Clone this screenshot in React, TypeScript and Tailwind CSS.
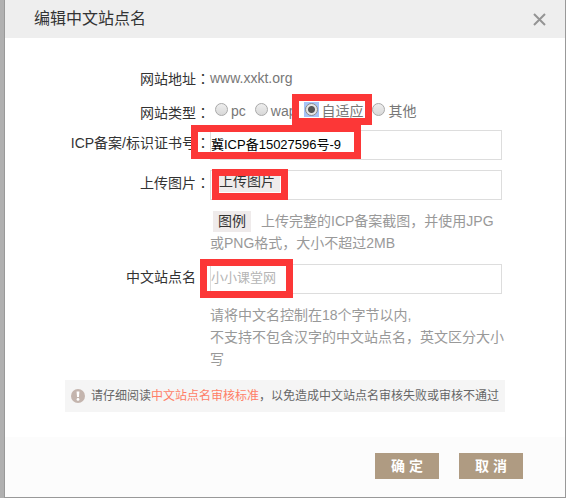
import React from "react";
import { clsx } from "clsx";

// Edit dialog for a site's Chinese name
// Layout: header bar, label/field rows, notice strip, footer buttons
// The red frames mark the fields that a tutorial reader has to fill in

const siteTypes = [
  { id: "pc", label: "pc" },
  { id: "wap", label: "wap" },
  { id: "responsive", label: "自适应", marked: true },
  { id: "other", label: "其他" },
];

// Full-width punctuation
const COLON = "\uff1a";
const COMMA = "\uff0c";

function Mark({ className }: { className: string }) {
  return (
    <span
      aria-hidden="true"
      className={clsx("pointer-events-none absolute z-10 border-[7px] border-[#fc3737]", className)}
    />
  );
}

// The TC face centres the colon in its cell
function Colon() {
  return <span className="font-['Noto_Sans_CJK_TC',sans-serif]">{COLON}</span>;
}

function Row({
  label,
  htmlFor,
  className,
  children,
}: {
  label: string;
  htmlFor?: string;
  className?: string;
  children: React.ReactNode;
}) {
  const labelClass = "w-[145px] shrink-0 whitespace-nowrap text-right leading-6 text-[#333]";

  return (
    <div className={clsx("flex items-start", className)}>
      {htmlFor ? (
        <label htmlFor={htmlFor} className={labelClass}>
          {label}
          <Colon />
        </label>
      ) : (
        <span className={labelClass}>
          {label}
          <Colon />
        </span>
      )}
      <div className="relative min-w-0 flex-1">{children}</div>
    </div>
  );
}

function Hint({ children }: { children: React.ReactNode }) {
  return <div className="ml-[145px] leading-[22px] text-[#999]">{children}</div>;
}

export default function App() {
  const inputClass =
    "block h-[30px] w-full border border-[#ddd] bg-white pb-[3px] text-[13px] text-black outline-none placeholder:text-[#b5b5b5]";

  return (
    <div className="min-h-screen bg-[#b0b0b0] pl-1 font-['Liberation_Sans','Noto_Sans_CJK_SC',sans-serif] text-[14px]">
      <div role="dialog" aria-labelledby="dialog-title" className="border-x border-b border-[#999] bg-white">
        {/* Header */}
        <header className="flex h-[38px] items-center justify-between bg-[#eee] pl-[29px] pr-[19px]">
          <h1 id="dialog-title" className="text-[16px] leading-6 text-[#333]">
            编辑中文站点名
          </h1>
          <button type="button" aria-label="关闭">
            <svg width="13" height="13" viewBox="0 0 13 13" fill="none" stroke="#949494" strokeWidth="2">
              <path d="M1 1l11 11M12 1L1 12" />
            </svg>
          </button>
        </header>

        {/* Form */}
        <form className="flex flex-col gap-[10px] px-[60px] pb-[25px] pt-7">
          <Row label="网站地址" className="h-6">
            <span className="leading-6 text-[#777]">www.xxkt.org</span>
          </Row>

          <Row label="网站类型" className="h-5">
            <div role="radiogroup" aria-label="网站类型" className="flex gap-2 pl-1 leading-[22px] text-[#777]">
              {siteTypes.map((type) => (
                <label key={type.id} className="relative flex gap-[2px] whitespace-nowrap">
                  <span className="mt-[2px] flex h-[15px] w-[15px] shrink-0 items-center justify-center has-checked:bg-[#a6c3f7]">
                    <input
                      type="radio"
                      name="siteType"
                      value={type.id}
                      defaultChecked={type.marked}
                      className="h-[13px] w-[13px] appearance-none rounded-full border border-[#a9a9a9] bg-linear-to-b from-[#eee] to-[#d8d8d8] checked:border-[#8a8a8a] checked:bg-[radial-gradient(circle,#555_0_3px,#e4e4e4_4px)]"
                    />
                  </span>
                  {type.label}
                  {type.marked && <Mark className="-bottom-[3px] -left-3 -right-[9px] -top-[6px]" />}
                </label>
              ))}
            </div>
          </Row>

          <Row label="ICP备案/标识证书号" htmlFor="icp">
            <div className="pr-[3px]">
              <input id="icp" type="text" defaultValue="冀ICP备15027596号-9" className={inputClass} />
            </div>
            <Mark className="-left-[19px] -top-[5px] h-[34px] w-[170px]" />
          </Row>

          <Row label="上传图片">
            <div className="mr-[3px] flex h-[30px] items-start border border-[#ddd] pl-[3px]">
              <button type="button" className="h-[21px] bg-[#efebeb] px-[5px] leading-[21px] text-[#333]">
                上传图片
              </button>
            </div>
            <Mark className="-top-px left-[2px] h-[31px] w-[76px]" />
          </Row>

          <Hint>
            <button type="button" className="ml-[3px] mr-[10px] bg-[#efebeb] px-[5px] leading-[21px] text-[#333]">
              图例
            </button>
            {`上传完整的ICP备案截图${COMMA}并使用JPG或PNG格式${COMMA}大小不超过2MB`}
          </Hint>

          <Row label="中文站点名" htmlFor="site-name">
            <div className="pr-[3px]">
              <input id="site-name" type="text" placeholder="小小课堂网" className={inputClass} />
            </div>
            <Mark className="-left-[10px] -top-[5px] h-[39px] w-[93px]" />
          </Row>

          <Hint>
            <p>请将中文名控制在18个字节以内,</p>
            <p>{`不支持不包含汉字的中文站点名${COMMA}英文区分大小写`}</p>
          </Hint>

          {/* Notice */}
          <div className="flex min-h-8 items-center gap-[6px] bg-[#f5f5f5] pl-[6px] text-[12px] text-[#666]">
            <svg width="14" height="14" viewBox="0 0 14 14" className="shrink-0">
              <circle cx="7" cy="7" r="7" fill="#c4b5ae" />
              <path d="M5.6 2.4h2.8L8 8H6z" fill="#fff" />
              <circle cx="7" cy="10.4" r="1.4" fill="#fff" />
            </svg>
            <p>
              请仔细阅读
              <a href="#standard" className="text-[#ff7e67]">
                中文站点名审核标准
              </a>
              {`${COMMA}以免造成中文站点名审核失败或审核不通过`}
            </p>
          </div>
        </form>

        {/* Footer */}
        <footer className="flex justify-end gap-5 bg-[#fcfcfc] pb-[18px] pr-[42px] pt-4">
          <button type="submit" className="h-[26px] w-16 bg-[#af9b82] font-bold text-white">
            确 定
          </button>
          <button type="button" className="h-[26px] w-16 bg-[#af9b82] font-bold text-white">
            取 消
          </button>
        </footer>
      </div>
    </div>
  );
}
